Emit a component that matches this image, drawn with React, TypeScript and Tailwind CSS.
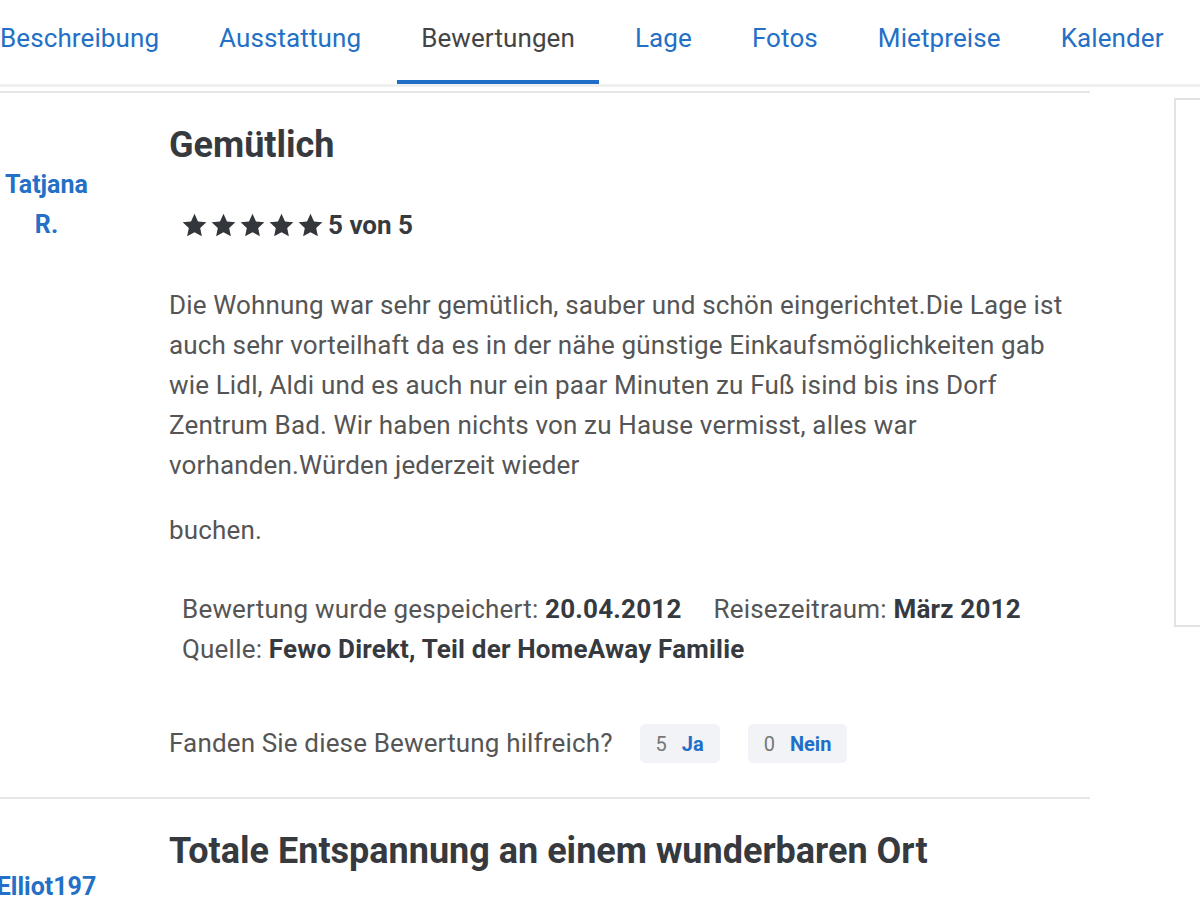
import React from 'react';

const tabs = ['Beschreibung', 'Ausstattung', 'Bewertungen', 'Lage', 'Fotos', 'Mietpreise', 'Kalender'];

function Star() {
  return (
    <svg viewBox="0 0 24 24" className="h-[29px] w-[29px] fill-[#33363b]">
      <path d="M12 2.3l2.9 6.3 6.9.8-5.1 4.7 1.4 6.8L12 17.5l-6.1 3.4 1.4-6.8-5.1-4.7 6.9-.8z" />
    </svg>
  );
}

function Vote({ count, label }: { count: number; label: string }) {
  return (
    <button className="flex h-[39px] items-center gap-[15px] rounded-[5px] bg-[#f1f3f6] px-[16px] text-[20px]">
      <span className="text-[#777]">{count}</span>
      <span className="font-bold text-[#1f6fc8]">{label}</span>
    </button>
  );
}

export default function App() {
  return (
    <div className="h-[900px] w-[1200px] overflow-hidden bg-white font-['Roboto',sans-serif]">
      <nav className="ml-[-24px] flex h-[87px] gap-3 border-b-[3px] border-[#f0f0f0]">
        {tabs.map((t) => (
          <div
            key={t}
            className={
              t === 'Bewertungen'
                ? 'h-[84px] whitespace-nowrap border-b-4 border-[#1f6fc8] px-6 pt-[23px] text-[26px] leading-[30px] tracking-[0.1px] text-[#444]'
                : 'h-[84px] whitespace-nowrap px-6 pt-[23px] text-[26px] leading-[30px] tracking-[0.1px] text-[#2370c6]'
            }
          >
            {t}
          </div>
        ))}
      </nav>

      <div className="flex gap-[84px] pt-[4px]">
        <main className="w-[1090px] shrink-0">
          <article className="grid grid-cols-[93px_1fr] gap-x-[76px] border-t-2 border-[#e6e6e6] pt-[32px] pb-[34px]">
            <div className="pt-[40px] text-center text-[25px] font-bold leading-[40px] text-[#2370c6]">
              Tatjana R.
            </div>
            <div>
              <h2 className="text-[36px] font-bold leading-[40px] text-[#363a3f]">Gemütlich</h2>
              <div className="mt-[40px] flex h-[40px] items-center pl-[11px]">
                <div className="flex">
                  <Star />
                  <Star />
                  <Star />
                  <Star />
                  <Star />
                </div>
                <span className="ml-[3px] text-[26px] font-bold text-[#363a3f]">5 von 5</span>
              </div>
              <p className="mt-[40px] pr-[10px] text-[26px] leading-[40px] tracking-[0.15px] text-[#555]">
                Die Wohnung war sehr gemütlich, sauber und schön eingerichtet.Die Lage ist auch sehr vorteilhaft da es in
                der nähe günstige Einkaufsmöglichkeiten gab wie Lidl, Aldi und es auch nur ein paar Minuten zu Fuß isind
                bis ins Dorf Zentrum Bad. Wir haben nichts von zu Hause vermisst, alles war vorhanden.Würden jederzeit
                wieder
              </p>
              <p className="mt-[25px] text-[26px] leading-[40px] tracking-[0.15px] text-[#555]">buchen.</p>
              <div className="mt-[39px] pl-[13px] text-[26px] leading-[40px] tracking-[0.2px] text-[#555]">
                <div className="whitespace-nowrap">
                  Bewertung wurde gespeichert: <b className="text-[#363a3f]">20.04.2012</b>
                  <span className="ml-[32px]">Reisezeitraum: </span>
                  <b className="text-[#363a3f]">März 2012</b>
                </div>
                <div>
                  Quelle: <b className="text-[#363a3f]">Fewo Direkt, Teil der HomeAway Familie</b>
                </div>
              </div>
              <div className="mt-[55px] flex items-center text-[26px] text-[#555]">
                <span className="mr-[27px] tracking-[0.15px]">Fanden Sie diese Bewertung hilfreich?</span>
                <div className="flex gap-[28px]">
                  <Vote count={5} label="Ja" />
                  <Vote count={0} label="Nein" />
                </div>
              </div>
            </div>
          </article>

          <article className="grid grid-cols-[93px_1fr] gap-x-[76px] border-t-2 border-[#e6e6e6] pt-[32px]">
            <div className="flex justify-center pt-[36px] text-[25px] font-bold leading-[40px] text-[#2370c6]">
              <span className="whitespace-nowrap">Elliot197</span>
            </div>
            <div>
              <h2 className="whitespace-nowrap text-[36px] font-bold leading-[40px] text-[#363a3f]">
                Totale Entspannung an einem wunderbaren Ort
              </h2>
            </div>
          </article>
        </main>

        <aside className="mt-[7px] h-[529px] flex-1 border-2 border-r-0 border-[#e2e2e2]" />
      </div>
    </div>
  );
}
